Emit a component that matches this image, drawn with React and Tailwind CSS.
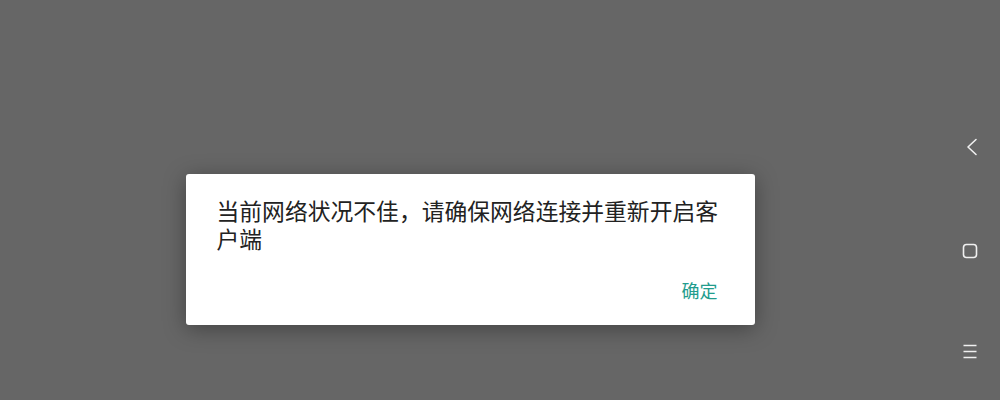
export default function App() {
  return (
    <div
      className="flex w-[1000px] h-[400px] bg-[#666666] overflow-hidden"
      style={{ fontFamily: '"Noto Sans CJK SC", "Noto Sans", sans-serif' }}
    >
      <div className="flex-1 flex justify-center pt-[174px]">
        <div className="w-[569px] h-[151px] bg-white rounded-[3px] shadow-[0_4px_22px_rgba(0,0,0,0.35)] flex flex-col">
          <div className="pl-[31px] pr-[27px] pt-[23px] text-[22.8px] leading-[28px] text-[#222222]">
            当前网络状况不佳，请确保网络连接并重新开启客户端
          </div>
          <div className="flex-1 flex items-end justify-end pr-[37px] pb-[23px]">
            <span className="text-[18px] leading-[24px] text-[#229c8d]">确定</span>
          </div>
        </div>
      </div>
      <div className="w-[60px] flex flex-col items-center pt-[138px]">
        <svg width="16" height="18" viewBox="0 0 16 18" className="ml-[4px]">
          <path d="M12 1.5 L4 9 L12 16.5" fill="none" stroke="#f0f0f0" strokeWidth="1.6" strokeLinecap="round" strokeLinejoin="round" />
        </svg>
        <svg width="16" height="16" viewBox="0 0 16 16" className="mt-[87px]">
          <rect x="1.5" y="1.5" width="13" height="13" rx="3" fill="none" stroke="#f0f0f0" strokeWidth="1.6" />
        </svg>
        <svg width="16" height="16" viewBox="0 0 16 16" className="mt-[84px]">
          <path d="M1.5 2.5 H14.5 M1.5 8.5 H14.5 M1.5 14.5 H14.5" fill="none" stroke="#f0f0f0" strokeWidth="1.4" />
        </svg>
      </div>
    </div>
  );
}
